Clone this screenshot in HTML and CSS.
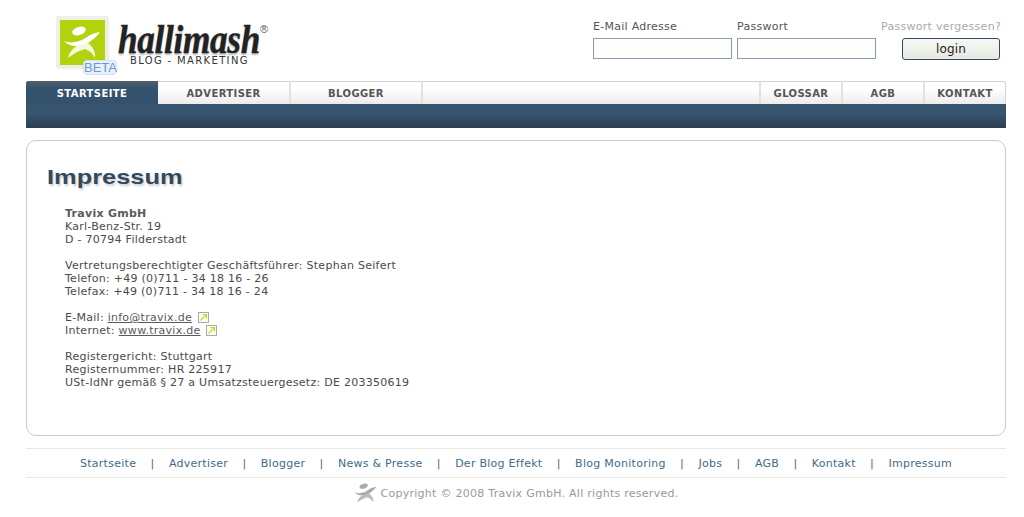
FILE: index.html
```html
<!DOCTYPE html>
<html lang="de">
<head>
<meta charset="utf-8">
<title>Impressum</title>
<link rel="stylesheet" href="styles.css">
</head>
<body>
<div class="page">
  <header class="header">
    <div class="logo">
      <div class="logo-mark">
        <svg class="logo-figure" viewBox="0 0 45 45" width="45" height="45" aria-hidden="true">
          <ellipse cx="19" cy="11" rx="7" ry="4" transform="rotate(-18 19 11)" fill="#fff"/>
          <path d="M4 21 C12 24 20 22 27 17 C31 14 35 13 40 12 C37 17 32 20 28 23 C21 27 10 28 4 21Z" fill="#fff"/>
          <path d="M21 25 C15 26 10 30 8 38 C13 34 18 31 25 29 C30 31 33 34 35 38 C36 32 33 27 28 23Z" fill="#f4f8dc"/>
        </svg>
        <span class="beta">BETA</span>
      </div>
      <div class="wordmark">
        <span class="wordmark-name">hallimash</span><span class="wordmark-reg">®</span>
        <span class="wordmark-sub">BLOG - MARKETING</span>
      </div>
    </div>
    <form class="login">
      <label class="field"><span>E-Mail Adresse</span><input class="input" type="text"></label>
      <label class="field"><span>Passwort</span><input class="input" type="password"></label>
      <div class="login-action">
        <a class="forgot" href="#">Passwort vergessen?</a>
        <button class="login-btn" type="button">login</button>
      </div>
    </form>
  </header>

  <nav class="nav">
    <div class="tabs">
      <a class="tab tab-active tab-start" href="#">STARTSEITE</a>
      <a class="tab tab-adv" href="#">ADVERTISER</a>
      <a class="tab tab-blog" href="#">BLOGGER</a>
      <span class="tab-spacer"></span>
      <a class="tab tab-glossar" href="#">GLOSSAR</a>
      <a class="tab tab-agb" href="#">AGB</a>
      <a class="tab tab-kontakt" href="#">KONTAKT</a>
    </div>
    <div class="nav-bar"></div>
  </nav>

  <main class="card">
    <h1 class="title">Impressum</h1>
    <div class="content">
      <p><strong>Travix GmbH</strong><br>Karl-Benz-Str. 19<br>D - 70794 Filderstadt</p>
      <p>Vertretungsberechtigter Geschäftsführer: Stephan Seifert<br>Telefon: +49 (0)711 - 34 18 16 - 26<br>Telefax: +49 (0)711 - 34 18 16 - 24</p>
      <p>E-Mail: <a href="#">info@travix.de</a><svg class="ext" viewBox="0 0 11 11" width="11" height="11" aria-hidden="true"><rect x=".5" y=".5" width="10" height="10" fill="#fffef4" stroke="#555" stroke-dasharray="1 1"/><path d="M2.5 8.5 L8 3 M4.5 2.5 H8.5 V6.5" fill="none" stroke="#c3d62e" stroke-width="1.2"/></svg><br>Internet: <a href="#">www.travix.de</a><svg class="ext" viewBox="0 0 11 11" width="11" height="11" aria-hidden="true"><rect x=".5" y=".5" width="10" height="10" fill="#fffef4" stroke="#555" stroke-dasharray="1 1"/><path d="M2.5 8.5 L8 3 M4.5 2.5 H8.5 V6.5" fill="none" stroke="#c3d62e" stroke-width="1.2"/></svg></p>
      <p>Registergericht: Stuttgart<br>Registernummer: HR 225917<br>USt-IdNr gemäß § 27 a Umsatzsteuergesetz: DE 203350619</p>
    </div>
  </main>

  <footer class="footer">
    <div class="footer-links">
      <a href="#">Startseite</a><i>|</i>
      <a href="#">Advertiser</a><i>|</i>
      <a href="#">Blogger</a><i>|</i>
      <a href="#">News &amp; Presse</a><i>|</i>
      <a href="#">Der Blog Effekt</a><i>|</i>
      <a href="#">Blog Monitoring</a><i>|</i>
      <a href="#">Jobs</a><i>|</i>
      <a href="#">AGB</a><i>|</i>
      <a href="#">Kontakt</a><i>|</i>
      <a href="#">Impressum</a>
    </div>
    <div class="copyright">
      <svg class="copy-icon" viewBox="3 6 38 34" width="23" height="21" aria-hidden="true">
        <ellipse cx="19" cy="11" rx="7" ry="4" transform="rotate(-18 19 11)" fill="#aaa"/>
        <path d="M4 21 C12 24 20 22 27 17 C31 14 35 13 40 12 C37 17 32 20 28 23 C21 27 10 28 4 21Z" fill="#aaa"/>
        <path d="M21 25 C15 26 10 30 8 38 C13 34 18 31 25 29 C30 31 33 34 35 38 C36 32 33 27 28 23Z" fill="#bbb"/>
      </svg>
      <span>Copyright © 2008 Travix GmbH. All rights reserved.</span>
    </div>
  </footer>
</div>
</body>
</html>
```

FILE: styles.css
```css
* { box-sizing: border-box; }
html, body { margin: 0; padding: 0; background: #fff; }
body {
  font-family: "DejaVu Sans", Verdana, sans-serif;
  font-size: 11px;
  line-height: 13px;
  letter-spacing: .27px;
  color: #4a4a4a;
  height: 517px;
  overflow: hidden;
}
.page { width: 980px; margin-left: 26px; }

.header { height: 81px; display: flex; justify-content: space-between; }
.logo { display: flex; padding: 17px 0 0 31px; }
.logo-mark {
  position: relative;
  width: 51px;
  height: 51px;
  background: #b4d20c;
  border: 3px solid #eef0e4;
  box-shadow: 0 0 2px #ccc;
}
.logo-figure { display: block; }
.beta {
  position: absolute;
  left: 23px;
  top: 40px;
  width: 34px;
  height: 15px;
  font: 13px/14px "Liberation Sans", sans-serif;
  letter-spacing: 0;
  text-align: center;
  color: #6c9ad2;
  background: #e8f1fb;
  border: 1px solid #d3e2f3;
  border-radius: 4px;
}
.wordmark { position: relative; margin-left: 10px; width: 155px; }
.wordmark-name {
  position: absolute;
  left: 0;
  top: 8px;
  font: italic bold 41px/29px "Liberation Serif", serif;
  letter-spacing: -.4px;
  color: #222;
  -webkit-text-stroke: .4px #222;
  text-shadow: 0 2px 2px #bbb;
  transform: scaleX(.86);
  transform-origin: left;
}
.wordmark-reg { position: absolute; left: 142px; top: 6px; font: 11px/12px "Liberation Sans", sans-serif; letter-spacing: 0; color: #555; }
.wordmark-sub {
  position: absolute;
  left: 12px;
  top: 38px;
  font: 10px/12px "DejaVu Sans", sans-serif;
  letter-spacing: 1.35px;
  white-space: nowrap;
  color: #333;
}

.login { display: flex; padding: 20px 6px 0 0; }
.field { display: flex; flex-direction: column; width: 144px; color: #555; }
.field span { height: 18px; }
.input {
  width: 139px;
  height: 21px;
  padding: 0;
  background: #fdfdfb;
  border: 1px solid #8a9db0;
  border-radius: 0;
}
.login-action { display: flex; flex-direction: column; align-items: flex-end; width: 119px; }
.forgot { height: 18px; margin-right: -1px; color: #aaa; text-decoration: none; white-space: nowrap; }
.login-btn {
  width: 98px;
  height: 22px;
  padding: 0;
  font: 12px/18px "DejaVu Sans", sans-serif;
  letter-spacing: .2px;
  color: #222;
  background: linear-gradient(#f8f8f4, #e8e8e2);
  border: 1px solid #2f4a62;
  border-radius: 3px;
}

.nav { height: 47px; }
.tabs {
  display: flex;
  height: 23px;
  background: linear-gradient(#fff, #fff 30%, #ececec);
  border: 1px solid #d4d4d4;
  border-bottom: 0;
  border-radius: 3px 3px 0 0;
}
.tab {
  display: flex;
  align-items: center;
  justify-content: center;
  padding-top: 2px;
  font: bold 10px/12px "DejaVu Sans", sans-serif;
  letter-spacing: .4px;
  color: #555;
  text-decoration: none;
  border-right: 2px solid #e2e2dc;
}
.tab-active {
  margin: -1px 0 0 -1px;
  height: 23px;
  padding-top: 3px;
  color: #fff;
  background: linear-gradient(#4f5f6d, #35526d 35%, #35526d);
  border-right: 0;
  border-radius: 2px 0 0 0;
}
.tab-start { width: 132px; }
.tab-adv { width: 133px; }
.tab-blog { width: 132px; }
.tab-spacer { flex: 1; border-right: 2px solid #e2e2dc; }
.tab-glossar { width: 82px; }
.tab-agb { width: 82px; }
.tab-kontakt { width: 80px; border-right: 0; }
.nav-bar { height: 24px; background: linear-gradient(#385570, #385570 40%, #2a4054); }

.card {
  height: 296px;
  margin-top: 12px;
  padding: 23px 20px 0;
  border: 1px solid #cbcbcb;
  border-radius: 10px;
}
.title {
  width: fit-content;
  margin: 0;
  font: bold 21px/26px "Liberation Sans", sans-serif;
  letter-spacing: 0;
  transform: scaleX(1.21);
  transform-origin: left;
  color: #33495e;
  text-shadow: 1px 2px 2px #ccc;
}
.content { padding: 17px 0 0 18px; }
.content p { margin: 0 0 13px; }
.content strong { color: #5a5a5a; }
.content a { color: #5a5a5a; text-decoration: underline; }
.ext { display: inline-block; margin-left: 6px; vertical-align: -2px; }

.footer { margin-top: 12px; }
.footer-links {
  display: flex;
  justify-content: center;
  gap: 14.35px;
  height: 30px;
  padding-top: 8px;
  border-top: 1px solid #e8e8e4;
  border-bottom: 1px solid #e8e8e4;
}
.footer-links a { color: #3f6a8c; text-decoration: none; }
.footer-links i { font-style: normal; color: #3f6a8c; }
.copyright {
  display: flex;
  justify-content: center;
  align-items: center;
  gap: 4px;
  padding-top: 5px;
  color: #999;
}
.copy-icon { display: block; }
```
